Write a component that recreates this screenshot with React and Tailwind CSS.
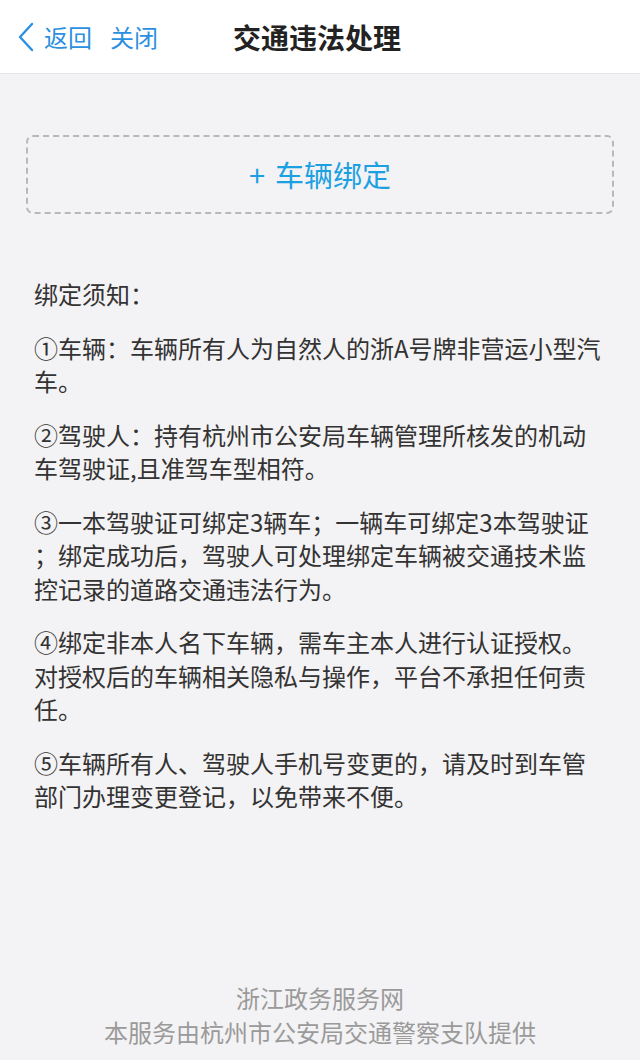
import React from 'react';

const rules = [
    ['①车辆：车辆所有人为自然人的浙A号牌非营运小型汽', '车。'],
    ['②驾驶人：持有杭州市公安局车辆管理所核发的机动', '车驾驶证,且准驾车型相符。'],
    ['③一本驾驶证可绑定3辆车；一辆车可绑定3本驾驶证', '；绑定成功后，驾驶人可处理绑定车辆被交通技术监', '控记录的道路交通违法行为。'],
    ['④绑定非本人名下车辆，需车主本人进行认证授权。', '对授权后的车辆相关隐私与操作，平台不承担任何责', '任。'],
    ['⑤车辆所有人、驾驶人手机号变更的，请及时到车管', '部门办理变更登记，以免带来不便。'],
];

const App = () => {
    return (
        <div className="w-[640px] min-h-[1060px] bg-[#f3f2f4] flex flex-col font-['Noto_Sans_CJK_SC','Noto_Sans',sans-serif]">
            {/* Header */}
            <div className="h-[74px] bg-white border-b border-[#e4e4e6] flex items-center relative shrink-0">
                <div className="flex items-center pl-[16px] text-[#2c8fe0] text-[24px]">
                    <svg width="20" height="32" viewBox="0 0 20 32" className="mr-[8px]">
                        <polyline points="16,3 4,16 16,29" fill="none" stroke="#2c8fe0" strokeWidth="2.4" strokeLinecap="round" strokeLinejoin="round" />
                    </svg>
                    <span>返回</span>
                    <span className="ml-[18px]">关闭</span>
                </div>
                <div className="absolute left-0 right-0 top-0 bottom-0 flex items-center justify-center pointer-events-none">
                    <span className="text-[28px] font-bold text-[#222] mr-[6px]">交通违法处理</span>
                </div>
            </div>

            {/* Bind button */}
            <div className="mx-[26px] mt-[61px] h-[79px] border-2 border-dashed border-[#b8b8ba] rounded-[7px] flex items-center justify-center text-[#1ba0e2] text-[29px]">
                <span className="mr-[10px]">+</span>
                <span>车辆绑定</span>
            </div>

            {/* Notice */}
            <div className="px-[34px] mt-[63px] text-[24px] leading-[33.5px] text-[#333] flex flex-col gap-[20px]">
                <p>绑定须知：</p>
                {rules.map((lines, i) => (
                    <p key={i}>
                        {lines.map((l, j) => (
                            <span key={j} className="block whitespace-nowrap">{l}</span>
                        ))}
                    </p>
                ))}
            </div>

            {/* Footer */}
            <div className="mt-auto pb-[11px] text-center text-[24px] leading-[34px] text-[#9a9a9a]">
                <p>浙江政务服务网</p>
                <p>本服务由杭州市公安局交通警察支队提供</p>
            </div>
        </div>
    );
};

export default App;
